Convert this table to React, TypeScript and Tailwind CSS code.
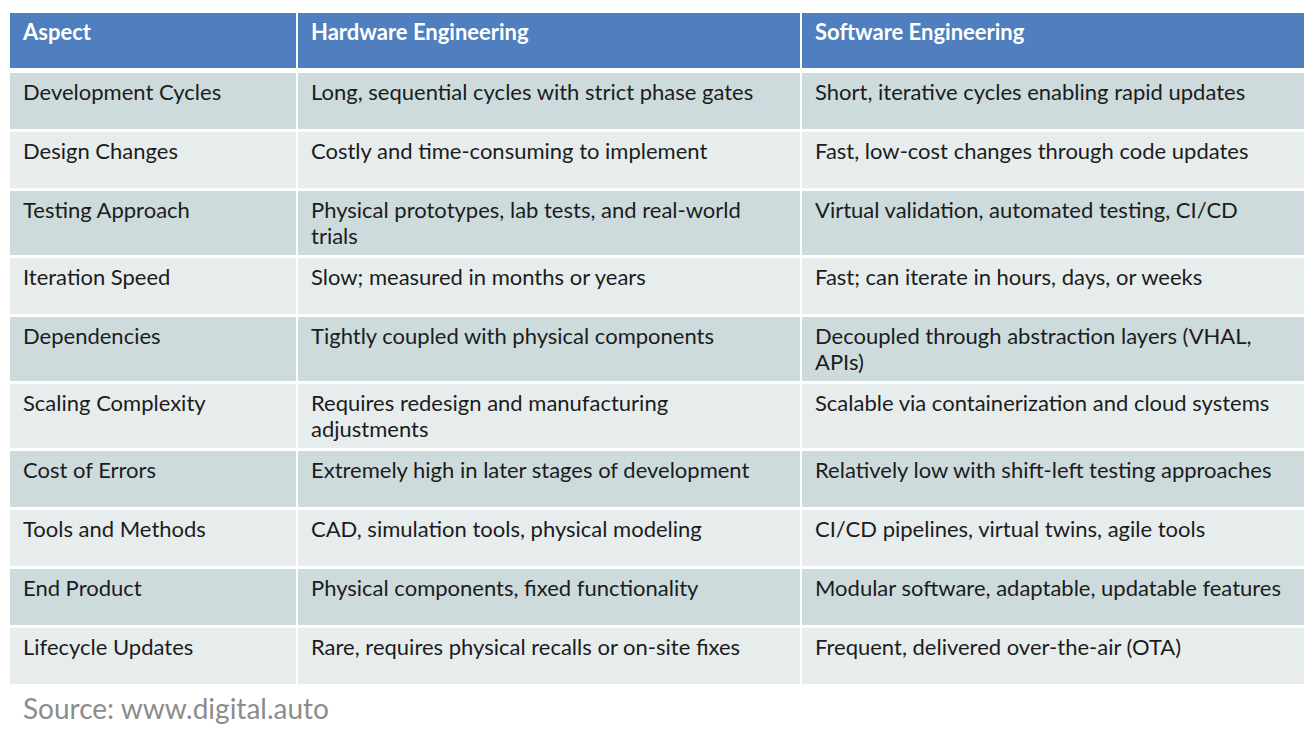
const rows: [string, string, string][] = [
  ["Development Cycles", "Long, sequential cycles with strict phase gates", "Short, iterative cycles enabling rapid updates"],
  ["Design Changes", "Costly and time-consuming to implement", "Fast, low-cost changes through code updates"],
  ["Testing Approach", "Physical prototypes, lab tests, and real-world trials", "Virtual validation, automated testing, CI/CD"],
  ["Iteration Speed", "Slow; measured in months or years", "Fast; can iterate in hours, days, or weeks"],
  ["Dependencies", "Tightly coupled with physical components", "Decoupled through abstraction layers (VHAL, APIs)"],
  ["Scaling Complexity", "Requires redesign and manufacturing adjustments", "Scalable via containerization and cloud systems"],
  ["Cost of Errors", "Extremely high in later stages of development", "Relatively low with shift-left testing approaches"],
  ["Tools and Methods", "CAD, simulation tools, physical modeling", "CI/CD pipelines, virtual twins, agile tools"],
  ["End Product", "Physical components, fixed functionality", "Modular software, adaptable, updatable features"],
  ["Lifecycle Updates", "Rare, requires physical recalls or on-site fixes", "Frequent, delivered over-the-air (OTA)"],
];

const headers = ["Aspect", "Hardware Engineering", "Software Engineering"];

export default function App() {
  return (
    <div className="min-h-screen bg-white pl-[10px] pt-[13px] font-['Lato','Noto_Sans',sans-serif]">
      <div className="w-[1294px]">
        <div className="mb-[5px] grid grid-cols-[286px_502px_502px] gap-x-[2px]">
          {headers.map((h) => (
            <div
              key={h}
              className="h-[55px] bg-[#4f7fbe] px-[13px] pt-[6px] text-[22px] font-bold leading-[26px] text-white"
            >
              {h}
            </div>
          ))}
        </div>

        <div className="grid grid-cols-[286px_502px_502px] gap-x-[2px] gap-y-[3px]">
          {rows.map((r, i) =>
            r.map((cell, j) => (
              <div
                key={`${i}-${j}`}
                className={`min-h-[56px] px-[13px] pb-[6px] pt-[6px] text-[22px] leading-[26px] text-[#1c1c1c] ${
                  i % 2 === 0 ? "bg-[#cddbdc]" : "bg-[#e7eded]"
                }`}
              >
                {cell}
              </div>
            ))
          )}
        </div>
      </div>

      <p className="mt-[8px] pl-[13px] text-[28px] leading-[33px] text-[#8c8c8c]">
        Source: www.digital.auto
      </p>
    </div>
  );
}
